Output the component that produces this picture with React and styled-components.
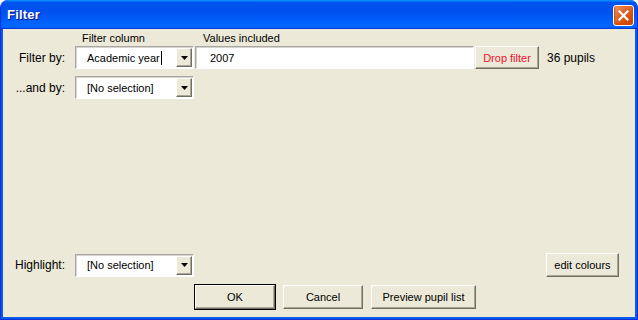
import React from "react";
import styled, { createGlobalStyle } from "styled-components";

const GlobalStyle = createGlobalStyle`
  html, body {
    margin: 0;
    padding: 0;
    background: #ffffff;
  }
  body {
    font-family: "Liberation Sans", Arial, sans-serif;
    font-size: 11px;
    color: #000;
  }
`;

const Window = styled.div`
  width: 638px;
  height: 320px;
  box-sizing: border-box;
  display: flex;
  flex-direction: column;
  border-radius: 8px 8px 0 0;
  background: #0a5ae8;
  border: 1px solid #0831d9;
  border-top: none;
  overflow: hidden;
`;

const TitleBar = styled.div`
  height: 29px;
  flex: none;
  display: flex;
  align-items: center;
  justify-content: space-between;
  padding: 0 4px 0 7px;
  margin: 0 -1px;
  border-radius: 8px 8px 0 0;
  background: linear-gradient(
    180deg,
    #0997ff 0%,
    #0053ee 9%,
    #0050ee 40%,
    #0066ff 88%,
    #0066ff 93%,
    #005bff 95%,
    #003dd7 97%,
    #003dd7 100%
  );
`;

const Title = styled.span`
  color: #fff;
  font-weight: bold;
  font-size: 13px;
  letter-spacing: 0.2px;
  text-shadow: 1px 1px #0f1089;
`;

const CloseButton = styled.button`
  width: 21px;
  height: 21px;
  padding: 0;
  margin-top: 2px;
  display: flex;
  align-items: center;
  justify-content: center;
  border: 1px solid #fff;
  border-radius: 3px;
  background: radial-gradient(circle at 85% 85%, #cc4600 0%, #dc6527 55%, #f0a080 100%);
  box-shadow: inset 0 -1px 2px 1px #da4600;
`;

const Client = styled.div`
  flex: 1;
  display: flex;
  flex-direction: column;
  margin: 0 2px 2px;
  background: #ece9d8;
  padding: 0 0 8px;
`;

const HeaderRow = styled.div`
  height: 17px;
  display: flex;
  align-items: center;
  padding-left: 79px;
`;

const Caption = styled.span`
  width: ${(p) => p.$width}px;
  flex: none;
`;

const Row = styled.div`
  display: flex;
  align-items: center;
  height: 23px;
  margin-bottom: ${(p) => p.$gap || 0}px;
`;

const Label = styled.span`
  width: 62px;
  margin-right: 10px;
  text-align: right;
  font-size: 12px;
  flex: none;
`;

const Field = styled.div`
  width: ${(p) => p.$width}px;
  height: 23px;
  box-sizing: border-box;
  flex: none;
  display: flex;
  align-items: center;
  background: #fff;
  border-style: solid;
  border-width: 1px;
  border-color: #a7a6aa #fff #fff #a7a6aa;
  box-shadow: inset 1px 1px #d8d5c6;
  margin-right: ${(p) => p.$after || 0}px;
`;

const FieldText = styled.span`
  flex: 1;
  padding-left: ${(p) => p.$indent}px;
  display: flex;
  align-items: center;
`;

const Caret = styled.span`
  display: inline-block;
  width: 1px;
  height: 14px;
  background: #000;
  margin-left: 1px;
`;

const DropArrow = styled.span`
  width: 16px;
  height: 19px;
  box-sizing: border-box;
  margin-right: 1px;
  flex: none;
  display: flex;
  align-items: center;
  justify-content: center;
  background: #ece9d8;
  border-style: solid;
  border-width: 1px;
  border-color: #fff #716f64 #716f64 #fff;
  box-shadow: inset -1px -1px #aca899;
`;

const Button = styled.button`
  width: ${(p) => p.$width}px;
  height: ${(p) => p.$height || 23}px;
  box-sizing: border-box;
  flex: none;
  padding: 0;
  font-family: "Liberation Sans", Arial, sans-serif;
  font-size: 11px;
  color: ${(p) => p.$color || "#000"};
  background: #ece9d8;
  border-style: solid;
  border-width: 1px;
  border-color: #fff #716f64 #716f64 #fff;
  box-shadow: inset -1px -1px #aca899;
  outline: ${(p) => (p.$default ? "1px solid #000" : "none")};
  margin-right: ${(p) => p.$after || 0}px;
`;

const Count = styled.span`
  font-size: 12px;
  margin-left: 8px;
`;

const Spacer = styled.div`
  flex: 1;
`;

const HighlightRow = styled(Row)`
  height: 24px;
  padding-right: 16px;
  margin-bottom: 8px;
`;

const ButtonBar = styled.div`
  display: flex;
  padding-left: 192px;
  height: 24px;
`;

const Arrow = () => (
  <svg width="7" height="4" viewBox="0 0 7 4">
    <path d="M0 0h7L3.5 4z" fill="#000" />
  </svg>
);

const Combo = ({ value, caret }) => (
  <Field $width={119} $after={1}>
    <FieldText $indent={11}>
      {value}
      {caret && <Caret />}
    </FieldText>
    <DropArrow>
      <Arrow />
    </DropArrow>
  </Field>
);

export default function App() {
  return (
    <>
      <GlobalStyle />
      <Window>
        <TitleBar>
          <Title>Filter</Title>
          <CloseButton>
            <svg width="11" height="11" viewBox="0 0 11 11">
              <path d="M1.5 1.5l8 8M9.5 1.5l-8 8" stroke="#fff" strokeWidth="2.2" strokeLinecap="square" />
            </svg>
          </CloseButton>
        </TitleBar>
        <Client>
          <HeaderRow>
            <Caption $width={121}>Filter column</Caption>
            <Caption $width={120}>Values included</Caption>
          </HeaderRow>
          <Row $gap={7}>
            <Label>Filter by:</Label>
            <Combo value="Academic year" caret />
            <Field $width={279} $after={1}>
              <FieldText $indent={14}>2007</FieldText>
            </Field>
            <Button $width={64} $color="#f0102e">Drop filter</Button>
            <Count>36 pupils</Count>
          </Row>
          <Row>
            <Label>...and by:</Label>
            <Combo value="[No selection]" />
          </Row>
          <Spacer />
          <HighlightRow>
            <Label>Highlight:</Label>
            <Combo value="[No selection]" />
            <Spacer />
            <Button $width={73} $height={24}>edit colours</Button>
          </HighlightRow>
          <ButtonBar>
            <Button $width={80} $height={24} $after={8} $default>OK</Button>
            <Button $width={80} $height={24} $after={8}>Cancel</Button>
            <Button $width={105} $height={24}>Preview pupil list</Button>
          </ButtonBar>
        </Client>
      </Window>
    </>
  );
}
